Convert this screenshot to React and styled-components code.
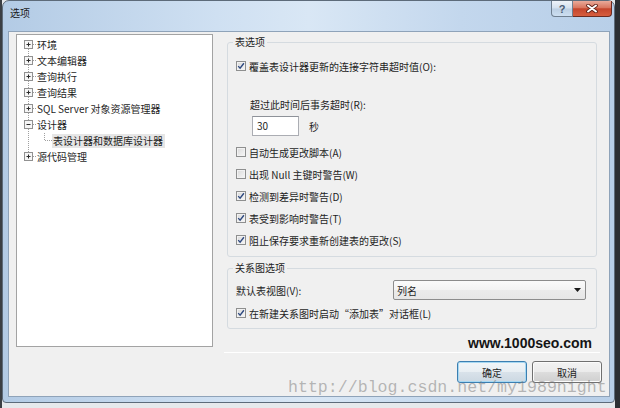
import React from 'react'
import styled, {createGlobalStyle} from 'styled-components'

const GlobalStyle = createGlobalStyle`
  html, body {
    margin: 0;
    padding: 0;
  }
  body {
    background: #2f3336;
    font-family: 'Noto Sans CJK SC', 'Noto Sans', sans-serif;
    color: #1e1e1e;
  }
`

const Desktop = styled.div`
  position: relative;
  width: 620px;
  height: 408px;
  overflow: hidden;
  background: linear-gradient(90deg, #3b3f44 0 2px, #e6e9ec 2px 615px, #2c2f33 615px);
`

const Window = styled.div`
  display: flex;
  flex-direction: column;
  width: 613px;
  height: 403px;
  margin-left: 2px;
  box-sizing: border-box;
  border: 1px solid #5d6b7a;
  border-radius: 7px 7px 4px 4px;
  background: linear-gradient(90deg, #b3cbe5 0%, #cfe0f2 35%, #d9e7f5 50%, #c3d7ed 75%, #b8cfe8 100%);
`

const TitleBar = styled.div`
  display: flex;
  align-items: flex-start;
  height: 30px;
  padding: 0 2px 0 7px;
`

const Title = styled.div`
  flex: 1;
  padding-top: 5px;
  font-size: 10px;
  line-height: 14px;
  color: #1b1b1b;
`

const CaptionButton = styled.div`
  display: flex;
  align-items: center;
  justify-content: center;
  width: ${p => p.$width}px;
  height: 16px;
  box-sizing: border-box;
  border: 1px solid ${p => (p.$close ? '#6b2a20' : '#6f7f90')};
  border-top: none;
  border-left: ${p => (p.$close ? 'none' : undefined)};
  border-radius: ${p => (p.$close ? '0 0 4px 0' : '0 0 0 4px')};
  background: ${p =>
    p.$close
      ? 'linear-gradient(#e9aa9a, #d9765f 45%, #c4452c 52%, #d65e3e 100%)'
      : 'linear-gradient(#eef3f9, #d3e0ee 48%, #bccfe3 52%, #cddff1 100%)'};
  font: bold 11px 'Liberation Sans', sans-serif;
  color: #4b5d74;
`

const Client = styled.div`
  flex: 1;
  display: flex;
  flex-direction: column;
  margin: 0 4px 5px 5px;
  padding: 2px 7px 0;
  border: 1px solid #8fa3b9;
  background: #f0f0f0;
  font-size: 10px;
`

const Main = styled.div`
  display: flex;
  gap: 11px;
  height: 314px;
`

const Tree = styled.div`
  width: 197px;
  height: 313px;
  box-sizing: border-box;
  padding-top: 2px;
  border: 1px solid #a3a3a3;
  background: #fff;
`

const TreeRow = styled.div`
  display: flex;
  align-items: center;
  height: 16px;
  padding-left: 0;
`

const TreeLabel = styled.span`
  padding: 0 2px 0 1px;
  line-height: 14px;
  white-space: nowrap;
  background: ${p => (p.$selected ? '#e6e6e6' : 'transparent')};
`

const RightColumn = styled.div`
  flex: 1;
  display: flex;
  flex-direction: column;
`

const Group = styled.fieldset`
  margin: ${p => p.$top}px 5px 0 3px;
  padding: 6px 10px ${p => p.$bottom}px 8px;
  border: 1px solid #d5dbe0;
  border-radius: 3px;
  min-width: 0;
`

const Legend = styled.legend`
  margin-left: -3px;
  padding: 0 2px;
  font-size: 10px;
  line-height: 14px;
`

const CheckRow = styled.label`
  display: flex;
  align-items: center;
  gap: 3px;
  height: 22px;
  margin-top: ${p => p.$top || 0}px;
  white-space: nowrap;
`

const Box = styled.span`
  display: inline-flex;
  align-items: center;
  justify-content: center;
  width: 10px;
  height: 10px;
  box-sizing: border-box;
  border: 1px solid #8e8f8f;
  background: linear-gradient(135deg, #d9d9d9, #f7f7f7);
  box-shadow: inset 0 0 0 1px #f2f2f2;
`

const FieldLabel = styled.div`
  margin-top: 20px;
  padding-left: 14px;
  line-height: 16px;
`

const InputRow = styled.div`
  display: flex;
  align-items: center;
  gap: 10px;
  margin: 3px 0 5px 16px;
`

const NumberBox = styled.div`
  width: 47px;
  height: 20px;
  box-sizing: border-box;
  padding-left: 4px;
  border: 1px solid #abadb3;
  border-top-color: #8e9299;
  background: #fff;
  font-size: 10px;
  line-height: 18px;
`

const SelectRow = styled.div`
  display: flex;
  align-items: center;
  justify-content: space-between;
  height: 20px;
  margin-top: -1px;
`

const Select = styled.div`
  display: flex;
  align-items: center;
  justify-content: space-between;
  width: 193px;
  height: 20px;
  box-sizing: border-box;
  padding: 0 4px 0 3px;
  border: 1px solid #8c8c8c;
  border-radius: 2px;
  background: linear-gradient(#fbfbfb, #f3f3f3 50%, #ebebeb 51%, #e6e6e6);
`

const SiteMark = styled.div`
  margin-top: 5px;
  padding-right: 10px;
  text-align: right;
  font: bold 14px/18px 'Liberation Sans', sans-serif;
  color: #151515;
`

const Separator = styled.div`
  height: 1px;
  margin-right: 2px;
  border-bottom: 1px solid #fff;
  background: #d2d2d2;
`

const Footer = styled.div`
  display: flex;
  justify-content: flex-end;
  gap: 5px;
  margin-top: 13px;
`

const Button = styled.div`
  display: flex;
  align-items: center;
  justify-content: center;
  width: 70px;
  height: 22px;
  box-sizing: border-box;
  border: 1px solid ${p => (p.$primary ? '#3c7fb1' : '#707070')};
  border-radius: 3px;
  background: ${p =>
    p.$primary
      ? 'linear-gradient(#f1f5f8, #e8eef3 50%, #d9e2ea 51%, #ccd8e2)'
      : 'linear-gradient(#f2f2f2, #ebebeb 50%, #dddddd 51%, #cfcfcf)'};
  box-shadow: ${p => (p.$primary ? 'inset 0 0 0 1px #a7d8f2' : 'inset 0 0 0 1px #fbfbfb')};
`

const BlogMark = styled.div`
  position: absolute;
  left: 288px;
  top: 378px;
  font: 16.6px/20px 'Liberation Mono', monospace;
  color: rgba(120, 120, 120, 0.5);
  white-space: nowrap;
  pointer-events: none;
`

const treeItems = [
  {label: '环境', level: 0, expander: 'plus'},
  {label: '文本编辑器', level: 0, expander: 'plus'},
  {label: '查询执行', level: 0, expander: 'plus'},
  {label: '查询结果', level: 0, expander: 'plus'},
  {label: 'SQL Server 对象资源管理器', level: 0, expander: 'plus'},
  {label: '设计器', level: 0, expander: 'minus'},
  {label: '表设计器和数据库设计器', level: 1, selected: true},
  {label: '源代码管理', level: 0, expander: 'plus'},
]

const dots = {stroke: '#a0a0a0', strokeWidth: 1, strokeDasharray: '1 1'}

function Gutter({item, index}) {
  const first = index === 0
  const last = index === treeItems.length - 1
  if (item.level === 1) {
    return (
      <svg width="35" height="16">
        <line x1="11.5" y1="0" x2="11.5" y2="16" {...dots} />
        <line x1="27.5" y1="0" x2="27.5" y2="8" {...dots} />
        <line x1="28" y1="7.5" x2="35" y2="7.5" {...dots} />
      </svg>
    )
  }
  return (
    <svg width="19" height="16">
      <line x1="11.5" y1={first ? 8 : 0} x2="11.5" y2={last ? 8 : 16} {...dots} />
      <line x1="16" y1="7.5" x2="19" y2="7.5" {...dots} />
      <rect x="7.5" y="3.5" width="8" height="8" fill="#f6f6f6" stroke="#919191" />
      <line x1="9.5" y1="7.5" x2="13.5" y2="7.5" stroke="#2b2b2b" />
      {item.expander === 'plus' && <line x1="11.5" y1="5.5" x2="11.5" y2="9.5" stroke="#2b2b2b" />}
    </svg>
  )
}

function Check({checked, children, top}) {
  return (
    <CheckRow $top={top}>
      <Box>
        {checked && (
          <svg width="8" height="8" viewBox="0 0 8 8">
            <path d="M1.2 4.1 L3.1 6.2 L6.9 1.3" fill="none" stroke="#2f4a80" strokeWidth="1.4" />
          </svg>
        )}
      </Box>
      {children}
    </CheckRow>
  )
}

export default function App() {
  return (
    <Desktop>
      <GlobalStyle />
      <Window>
        <TitleBar>
          <Title>选项</Title>
          <CaptionButton $width={22}>?</CaptionButton>
          <CaptionButton $width={39} $close>
            <svg width="12" height="9" viewBox="0 0 12 9">
              <path d="M2 1.5 L10 7.5 M10 1.5 L2 7.5" stroke="#5a1d14" strokeWidth="3.6" strokeLinecap="round" />
              <path d="M2 1.5 L10 7.5 M10 1.5 L2 7.5" stroke="#fff" strokeWidth="2" strokeLinecap="round" />
            </svg>
          </CaptionButton>
        </TitleBar>
        <Client>
          <Main>
            <Tree>
              {treeItems.map((item, index) => (
                <TreeRow key={item.label}>
                  <Gutter item={item} index={index} />
                  <TreeLabel $selected={item.selected}>{item.label}</TreeLabel>
                </TreeRow>
              ))}
            </Tree>
            <RightColumn>
              <Group $top={1} $bottom={5}>
                <Legend>表选项</Legend>
                <Check checked>覆盖表设计器更新的连接字符串超时值(O):</Check>
                <FieldLabel>超过此时间后事务超时(R):</FieldLabel>
                <InputRow>
                  <NumberBox>30</NumberBox>
                  <span>秒</span>
                </InputRow>
                <Check>自动生成更改脚本(A)</Check>
                <Check>出现 Null 主键时警告(W)</Check>
                <Check checked>检测到差异时警告(D)</Check>
                <Check checked>表受到影响时警告(T)</Check>
                <Check checked>阻止保存要求重新创建表的更改(S)</Check>
              </Group>
              <Group $top={4} $bottom={4}>
                <Legend>关系图选项</Legend>
                <SelectRow>
                  <span>默认表视图(V):</span>
                  <Select>
                    <span>列名</span>
                    <svg width="7" height="4" viewBox="0 0 7 4">
                      <path d="M0 0 H7 L3.5 4 Z" fill="#1a1a1a" />
                    </svg>
                  </Select>
                </SelectRow>
                <Check checked top={2}>在新建关系图时启动“添加表”对话框(L)</Check>
              </Group>
              <SiteMark>www.1000seo.com</SiteMark>
              <Separator />
            </RightColumn>
          </Main>
          <Footer>
            <Button $primary>确定</Button>
            <Button>取消</Button>
          </Footer>
        </Client>
      </Window>
      <BlogMark>http://blog.csdn.net/my1989night</BlogMark>
    </Desktop>
  )
}
